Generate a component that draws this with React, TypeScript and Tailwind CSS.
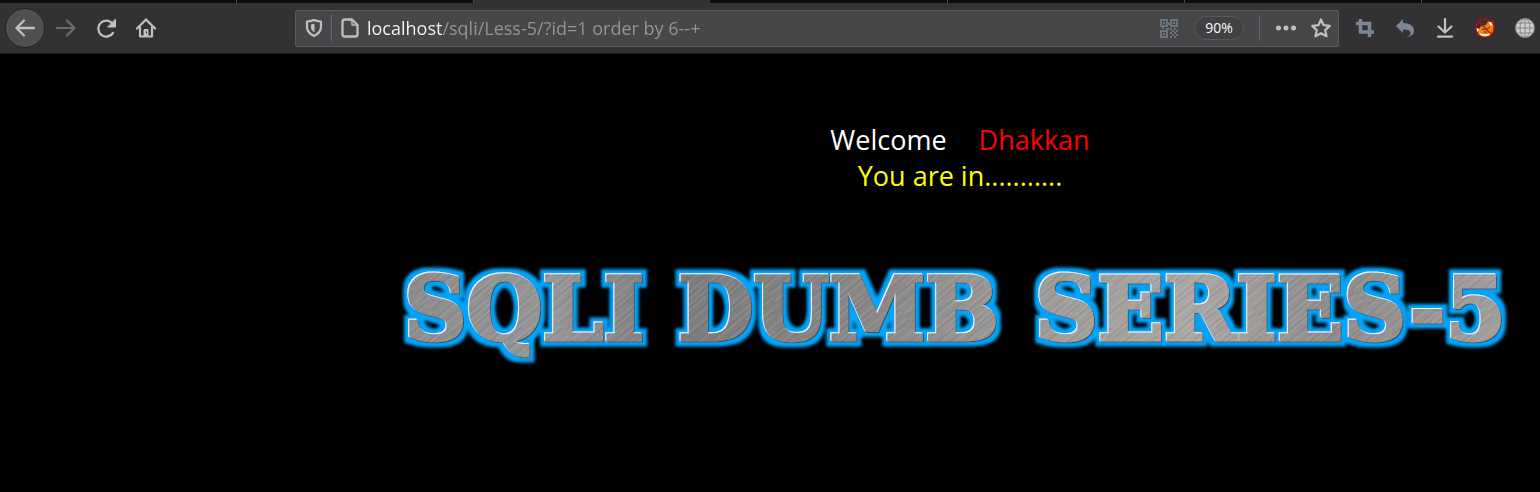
import type { ReactNode } from 'react';

const tabs = [
  { id: 1, width: 'w-[237px]', active: false },
  { id: 2, width: 'w-[237px]', active: false },
  { id: 3, width: 'w-[237px]', active: true },
  { id: 4, width: 'w-[237px]', active: false },
  { id: 5, width: 'w-[237px]', active: false },
  { id: 6, width: 'w-[237px]', active: false },
];

function IconButton({ label, className = '', children }: { label: string; className?: string; children: ReactNode }) {
  return (
    <button type="button" aria-label={label} className={`flex size-10 shrink-0 items-center justify-center ${className}`}>
      {children}
    </button>
  );
}

function Icon({ className = '', children }: { className?: string; children: ReactNode }) {
  return (
    <svg viewBox="0 0 20 20" className={`size-5 shrink-0 ${className}`} fill="none" stroke="currentColor" strokeWidth="2" strokeLinecap="round" strokeLinejoin="round" aria-hidden="true">
      {children}
    </svg>
  );
}

function QrIcon() {
  return (
    <svg viewBox="0 0 18 19" className="h-[19px] w-[18px] shrink-0 text-[#68747f]" fill="currentColor" aria-hidden="true">
      <path fillRule="evenodd" d="M0 0h8v8H0zM2 2v4h4v-4zM10 0h8v8h-8zM12 2v4h4v-4zM0 11h8v8H0zM2 13v4h4v-4z" />
      <path d="M3 3h2v2H3zM13 3h2v2h-2zM3 14h2v2H3zM8 4h2v2H8zM2 8h2v2H2zM6 9h3v2H6zM10 9h2v2h-2zM14 9h2v2h-2zM12 11h2v2h-2zM16 11h2v2h-2zM10 13h2v2h-2zM14 13h2v2h-2zM12 15h2v2h-2zM16 15h2v2h-2zM10 17h2v2h-2zM14 17h2v2h-2z" />
    </svg>
  );
}

function FoxBlockedIcon() {
  return (
    <svg viewBox="0 0 20 20" className="size-5" aria-hidden="true">
      <path d="M1 10l3 1 2-3 5-1 2-4 2 1 1 1 2-2 1 5-1 6-3 4-6 1-6-2z" fill="#e98418" />
      <path d="M1 10l3 1-1 3-2-1zM14 4l1 3 2 1 1-4zM4 15l4 1 5 0 2-2 0 3-5 2-5-1z" fill="#f4eee6" />
      <path d="M7 11l3 1M12 11l3-2M9 14l3 0" stroke="#63340b" strokeWidth="1" />
      <circle cx="10" cy="10" r="9.200" fill="none" stroke="#c90606" strokeWidth="1.300" />
      <path d="M3.500 3.500L16.500 16.500" stroke="#c90606" strokeWidth="1.300" />
    </svg>
  );
}

function Toolbar() {
  return (
    <nav aria-label="Browser" className="flex h-[51px] items-center overflow-hidden border-b border-[#1b1b1d] bg-[#323234] text-[#bfbfc0]">
      <div className="flex w-[295px] shrink-0 items-center pl-[5px]">
        <IconButton label="Back" className="rounded-full border border-[#242426] bg-[#505051]">
          <Icon><path d="M19 10H1.500M9 2.500L1.500 10L9 17.500" strokeWidth="2.400" /></Icon>
        </IconButton>
        <IconButton label="Forward" className="ml-px text-[#6d6d6f]">
          <Icon><path d="M1 10H18.500M11 2.500L18.500 10L11 17.500" strokeWidth="2.200" /></Icon>
        </IconButton>
        <IconButton label="Reload">
          <Icon>
            <path d="M17 15A8 8 0 1 1 16.500 5.500" strokeWidth="2.300" />
            <path d="M19.500 1.500v7.500h-7.500z" fill="currentColor" strokeWidth="1" />
          </Icon>
        </IconButton>
        <IconButton label="Home">
          <Icon>
            <path d="M1 10.500L10 1.500L19 10.500M4 9v9.500h12V9" strokeWidth="2.200" />
            <path d="M8 18v-6.500h4V18" fill="currentColor" strokeWidth="1" />
            <path d="M10.500 14v1" stroke="#323234" strokeWidth="1" />
          </Icon>
        </IconButton>
      </div>
      <div className="flex h-[37px] min-w-0 flex-1 items-center rounded-xs border border-[#5c5c5e] bg-[#474749]">
        <button type="button" aria-label="Tracking protection" className="ml-2 flex shrink-0">
          <Icon>
            <path d="M10 2C7.500 3 5 3.500 3 3.500V9c0 4.500 3 7 7 9 4-2 7-4.500 7-9V3.500c-2 0-4.500-.5-7-1.500z" strokeWidth="2.200" />
            <path d="M10.500 5.500v9c-2.500-1.500-3.500-3-3.500-5.500V6.500z" fill="currentColor" stroke="none" />
          </Icon>
        </button>
        <span className="ml-[7px] h-[26px] w-px shrink-0 bg-[#626b75]" />
        <button type="button" aria-label="Site information" className="ml-2 flex shrink-0">
          <Icon>
            <path d="M4.500 1.500H12l5.500 5.500v9.500a2 2 0 0 1-2 2h-11a2 2 0 0 1-2-2v-13a2 2 0 0 1 2-2z" strokeWidth="2.300" />
            <path d="M12 2v5h5" strokeWidth="1.500" />
          </Icon>
        </button>
        <input
          type="text"
          aria-label="Address"
          defaultValue="localhost/sqli/Less-5/?id=1 order by 6--+"
          className="ml-[7px] h-8 min-w-0 flex-1 bg-[linear-gradient(90deg,#f8f8f8_75px,#969697_75px)] bg-clip-text text-[18px] text-transparent outline-none"
        />
        <button type="button" aria-label="QR code" className="flex shrink-0"><QrIcon /></button>
        <button type="button" aria-label="Zoom level 90%" className="ml-4 h-6 w-[50px] shrink-0 rounded-full border border-[#59595b] bg-[#414143] text-[14px] leading-none text-[#fafafa]">90%</button>
        <span className="ml-[15px] h-[26px] w-px shrink-0 bg-[#626268]" />
        <button type="button" aria-label="Page actions" className="ml-4 flex shrink-0">
          <Icon><g fill="currentColor" stroke="none"><circle cx="2.500" cy="10" r="2.500" /><circle cx="10" cy="10" r="2.500" /><circle cx="17.500" cy="10" r="2.500" /></g></Icon>
        </button>
        <button type="button" aria-label="Bookmark this page" className="mr-[7px] ml-[15px] flex shrink-0">
          <Icon><path d="M10 1.500l2.600 5.700 6.200.700-4.600 4.200 1.300 6.200L10 15.200l-5.500 3.100 1.300-6.200L1.200 7.900l6.200-.700z" strokeWidth="2.200" /></Icon>
        </button>
      </div>
      <div className="ml-[6px] flex w-[195px] shrink-0">
        <IconButton label="Crop" className="text-[#7b8794]">
          <svg viewBox="0 0 18 18" className="size-[18px]" fill="none" stroke="currentColor" strokeWidth="3.500" aria-hidden="true">
            <path d="M4.500 0v13h13.500M0 4.500h13.500V18" />
          </svg>
        </IconButton>
        <IconButton label="Undo" className="text-[#7b8794]">
          <svg viewBox="0 0 18 18" className="size-[18px]" fill="currentColor" aria-hidden="true">
            <path d="M7 0v4c7 0 11 3 11 8 0 3-2 5-7 6 3-2 3.500-3 3.500-4 0-2.500-2.500-3.500-7.500-3.500v3.500L0 7z" />
          </svg>
        </IconButton>
        <IconButton label="Downloads">
          <Icon><path d="M10 1v13M3.500 8.500L10 14.500l6.500-6M3 18.700h14" strokeWidth="2.200" /></Icon>
        </IconButton>
        <IconButton label="Proxy disabled"><FoxBlockedIcon /></IconButton>
        <IconButton label="Language">
          <svg viewBox="0 0 20 20" className="size-5" fill="none" stroke="#858585" strokeWidth="1" aria-hidden="true">
            <circle cx="10" cy="10" r="9.500" fill="#cfcfcf" />
            <path d="M10 .5v19M.5 10h19M2.500 5h15M2.500 15h15" />
            <ellipse cx="10" cy="10" rx="5" ry="9.500" />
          </svg>
        </IconButton>
      </div>
    </nav>
  );
}

function Logo() {
  return (
    <svg viewBox="0 0 1160 120" className="mt-[56px] block w-full font-['DejaVu_Serif',serif] text-[87px] font-bold" role="img" aria-label="SQLI DUMB SERIES-5">
      <defs>
        <linearGradient id="sheen" x1="0" y1="0" x2="1160" y2="0" gradientUnits="userSpaceOnUse">
          <stop offset="0" stopColor="#8b8b8b" />
          <stop offset=".15" stopColor="#969696" />
          <stop offset=".25" stopColor="#7c7c7c" />
          <stop offset=".42" stopColor="#898786" />
          <stop offset=".52" stopColor="#989694" />
          <stop offset=".7" stopColor="#aaa7a4" />
          <stop offset=".82" stopColor="#8e8c8a" />
          <stop offset="1" stopColor="#a5a3a1" />
        </linearGradient>
        <pattern id="metal" width="1160" height="120" patternUnits="userSpaceOnUse">
          <rect width="1160" height="120" fill="url(#sheen)" />
          <rect width="1160" height="120" fill="url(#brush)" />
        </pattern>
        <pattern id="brush" width="31" height="90" patternUnits="userSpaceOnUse" patternTransform="rotate(50)">
          <path d="M1 0v50M6 20v70M10 0v35M14 40v50M19 0v70M24 10v60M28 50v40" stroke="#fff" strokeOpacity=".14" />
          <path d="M3 30v60M8 0v40M12 10v50M17 50v40M22 0v50M26 30v60" stroke="#222" strokeOpacity=".14" />
        </pattern>
        <filter id="glow" x="-5%" y="-25%" width="110%" height="150%">
          <feMorphology in="SourceAlpha" operator="dilate" radius="5" result="wide" />
          <feGaussianBlur in="wide" stdDeviation="1.700" result="soft" />
          <feFlood floodColor="#06a5fb" />
          <feComposite in2="soft" operator="in" result="halo" />
          <feOffset in="SourceAlpha" dx="-1" dy="-1" result="up" />
          <feFlood floodColor="#eef4f6" />
          <feComposite in2="up" operator="in" result="light" />
          <feOffset in="SourceAlpha" dx="1" dy="1" result="down" />
          <feFlood floodColor="#35505f" />
          <feComposite in2="down" operator="in" result="shade" />
          <feMerge>
            <feMergeNode in="halo" />
            <feMergeNode in="shade" />
            <feMergeNode in="light" />
            <feMergeNode in="SourceGraphic" />
          </feMerge>
        </filter>
      </defs>
      <g fill="url(#metal)" stroke="url(#metal)" strokeWidth="3">
        <text x="24" y="90" filter="url(#glow)">SQLI</text>
        <text x="298" y="90" filter="url(#glow)">DUMB</text>
        <text x="655" y="90" filter="url(#glow)">SERIES-5</text>
      </g>
    </svg>
  );
}

export default function App() {
  return (
    <div className="min-h-screen overflow-hidden bg-black font-['Open_Sans','Noto_Sans',sans-serif]">
      <div className="flex h-[3px] overflow-hidden bg-[#0c0c0d]">
        {tabs.map((tab) => (
          <div key={tab.id} className={`shrink-0 border-r ${tab.width} ${tab.active ? 'border-[#0c0c0d] bg-[#323234]' : 'border-[#505052]'}`} />
        ))}
      </div>
      <Toolbar />
      <main className="pt-[68px] pl-[380px] text-center text-[27px] leading-9">
        <p className="flex justify-center gap-8">
          <span className="text-white">Welcome</span>
          <span className="text-[#ff0000]">Dhakkan</span>
        </p>
        <p className="text-[#ffff00]">You are in...........</p>
        <Logo />
      </main>
    </div>
  );
}
